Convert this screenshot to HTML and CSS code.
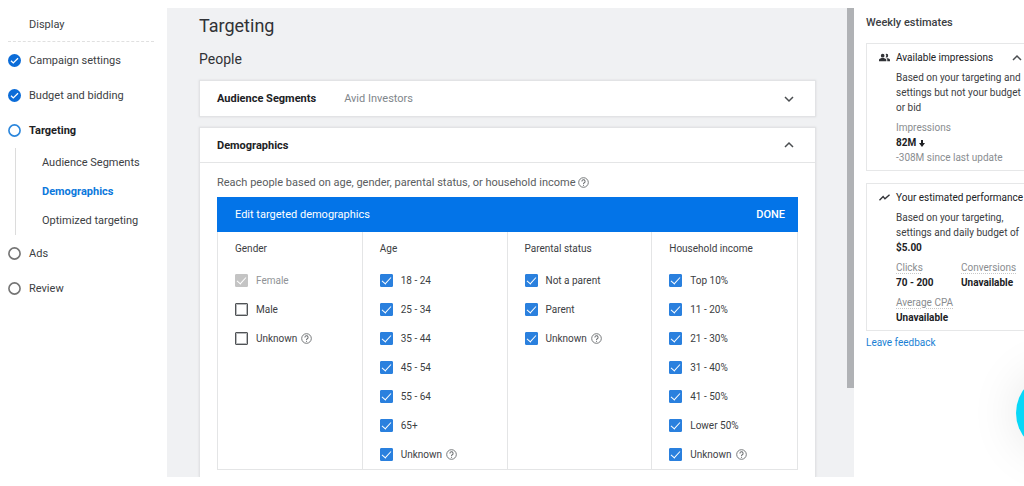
FILE: index.html
```html
<!DOCTYPE html>
<html lang="en">
<head>
<meta charset="utf-8">
<title>Targeting</title>
<link rel="stylesheet" href="styles.css">
</head>
<body>
<svg class="defs" aria-hidden="true">
  <symbol id="help" viewBox="0 0 24 24"><circle cx="12" cy="12" r="10.500" fill="none" stroke="currentColor" stroke-width="2"/><path d="M8.500 9.600a3.500 3.500 0 1 1 5.200 3c-1.200.7-1.700 1.200-1.700 2.600" fill="none" stroke="currentColor" stroke-width="2.200"/><path d="M10.900 17h2.200v2.200h-2.200z" fill="currentColor"/></symbol>
  <symbol id="done" viewBox="0 0 24 24"><circle cx="12" cy="12" r="12" fill="#0b6cd8"/><path d="M5.500 12.300l4.300 4.200 8.700-8.700" fill="none" stroke="#fff" stroke-width="2.400"/></symbol>
  <symbol id="ring" viewBox="0 0 24 24"><circle cx="12" cy="12" r="10.300" fill="#fff" stroke="currentColor" stroke-width="3"/></symbol>
  <symbol id="down" viewBox="0 0 10 10"><path d="M1 3l4 4 4-4" fill="none" stroke="currentColor" stroke-width="1.500"/></symbol>
  <symbol id="up" viewBox="0 0 10 10"><path d="M1 7l4-4 4 4" fill="none" stroke="currentColor" stroke-width="1.500"/></symbol>
</svg>
<div class="app">
  <nav class="steps" aria-label="Campaign steps">
    <p class="steps-title">Display</p>
    <a class="step" href="#settings"><svg class="step-icon"><use href="#done"/></svg>Campaign settings</a>
    <a class="step" href="#budget"><svg class="step-icon"><use href="#done"/></svg>Budget and bidding</a>
    <a class="step current" href="#targeting"><svg class="step-icon"><use href="#ring"/></svg>Targeting</a>
    <div class="substeps">
      <a href="#audience">Audience Segments</a>
      <a class="active" href="#demographics">Demographics</a>
      <a href="#optimized">Optimized targeting</a>
    </div>
    <a class="step" href="#ads"><svg class="step-icon"><use href="#ring"/></svg>Ads</a>
    <a class="step" href="#review"><svg class="step-icon"><use href="#ring"/></svg>Review</a>
  </nav>

  <main class="main">
    <div class="content">
      <h1>Targeting</h1>
      <h2>People</h2>
      <section class="card" id="audience">
        <div class="card-head">
          <h3>Audience Segments</h3>
          <span class="summary">Avid Investors</span>
          <button class="toggle" type="button" aria-label="Expand audience segments"><svg><use href="#down"/></svg></button>
        </div>
      </section>
      <section class="card open" id="demographics">
        <div class="card-head">
          <h3>Demographics</h3>
          <button class="toggle" type="button" aria-label="Collapse demographics"><svg><use href="#up"/></svg></button>
        </div>
        <div class="card-body">
          <p class="lead">Reach people based on age, gender, parental status, or household income <svg class="help"><use href="#help"/></svg></p>
          <div class="editor">
            <div class="editor-head"><span>Edit targeted demographics</span><button type="button">DONE</button></div>
            <div class="groups">
              <fieldset>
                <legend>Gender</legend>
                <label><input type="checkbox" checked disabled><span>Female</span></label>
                <label><input type="checkbox"><span>Male</span></label>
                <label><input type="checkbox"><span>Unknown</span><svg class="help"><use href="#help"/></svg></label>
              </fieldset>
              <fieldset>
                <legend>Age</legend>
                <label><input type="checkbox" checked><span>18 - 24</span></label>
                <label><input type="checkbox" checked><span>25 - 34</span></label>
                <label><input type="checkbox" checked><span>35 - 44</span></label>
                <label><input type="checkbox" checked><span>45 - 54</span></label>
                <label><input type="checkbox" checked><span>55 - 64</span></label>
                <label><input type="checkbox" checked><span>65+</span></label>
                <label><input type="checkbox" checked><span>Unknown</span><svg class="help"><use href="#help"/></svg></label>
              </fieldset>
              <fieldset>
                <legend>Parental status</legend>
                <label><input type="checkbox" checked><span>Not a parent</span></label>
                <label><input type="checkbox" checked><span>Parent</span></label>
                <label><input type="checkbox" checked><span>Unknown</span><svg class="help"><use href="#help"/></svg></label>
              </fieldset>
              <fieldset>
                <legend>Household income</legend>
                <label><input type="checkbox" checked><span>Top 10%</span></label>
                <label><input type="checkbox" checked><span>11 - 20%</span></label>
                <label><input type="checkbox" checked><span>21 - 30%</span></label>
                <label><input type="checkbox" checked><span>31 - 40%</span></label>
                <label><input type="checkbox" checked><span>41 - 50%</span></label>
                <label><input type="checkbox" checked><span>Lower 50%</span></label>
                <label><input type="checkbox" checked><span>Unknown</span><svg class="help"><use href="#help"/></svg></label>
              </fieldset>
            </div>
          </div>
        </div>
      </section>
    </div>
    <div class="scrollbar"><div class="thumb"></div></div>
  </main>

  <aside class="estimates">
    <h2>Weekly estimates</h2>
    <section class="estimate">
      <div class="estimate-head">
        <svg class="estimate-icon" viewBox="0 0 24 24"><path fill="currentColor" d="M8 4a4 4 0 1 1 0 8 4 4 0 0 1 0-8zM16 4a4 4 0 1 1-1.500 7.700 6 6 0 0 0 0-7.400A4 4 0 0 1 16 4zM0 20v-3c0-2.700 5.300-4 8-4s8 1.300 8 4v3zM18 20v-3c0-1.600-.8-2.800-2-3.800 3 .2 8 1.400 8 3.800v3z"/></svg>
        <h3>Available impressions</h3>
        <button class="toggle" type="button" aria-label="Collapse available impressions"><svg><use href="#up"/></svg></button>
      </div>
      <div class="estimate-body">
        <p>Based on your targeting and settings but not your budget or bid</p>
        <dl><div class="wide"><dt>Impressions</dt><dd>82M <svg class="drop" viewBox="0 0 6 8"><path fill="currentColor" d="M2 1h2v3h2L3 8 0 4h2z"/></svg></dd><dd class="note">-308M since last update</dd></div></dl>
      </div>
    </section>
    <section class="estimate">
      <div class="estimate-head">
        <svg class="estimate-icon" viewBox="0 0 24 24"><path fill="none" stroke="currentColor" stroke-width="3" d="M1 18l8-8 4 5 10-9"/></svg>
        <h3>Your estimated performance</h3>
      </div>
      <div class="estimate-body">
        <p>Based on your targeting, settings and daily budget of <strong>$5.00</strong></p>
        <dl>
          <div><dt class="hint">Clicks</dt><dd>70 - 200</dd></div>
          <div><dt class="hint">Conversions</dt><dd>Unavailable</dd></div>
          <div><dt class="hint">Average CPA</dt><dd>Unavailable</dd></div>
        </dl>
      </div>
    </section>
    <a class="feedback" href="#feedback">Leave feedback</a>
  </aside>
</div>
<button class="chat" type="button" aria-label="Open chat"></button>
</body>
</html>
```
FILE: styles.css
```css
* { box-sizing: border-box; }

body {
  margin: 0;
  background: #fff;
  color: #3c4043;
  font: 11px/15px Roboto, "Liberation Sans", sans-serif;
}

h1, h2, h3, p, dl, dd { margin: 0; }
h1, h2 { font-weight: 400; }
a { color: inherit; text-decoration: none; }
button { border: 0; padding: 0; background: none; color: inherit; font: inherit; cursor: pointer; }
.defs { display: none; }

.app {
  display: grid;
  grid-template-columns: 167px minmax(0, 1fr) 170px;
  min-height: 100vh;
  padding: 8px 0 9px;
}

/* Step navigation */
.steps { padding: 0 13px 0 8px; }
.steps-title {
  padding: 9px 0 9px 21px;
  border-bottom: 1px dashed #e0e0e0;
}
.step { display: flex; align-items: center; gap: 8px; height: 35px; }
.steps-title + .step { margin-top: 1px; }
.step-icon { width: 13px; height: 13px; color: #757575; }
.current { color: #202124; font-weight: 700; }
.current .step-icon { color: #2b86dc; }
.substeps { margin: 0 0 1px 7px; padding-left: 26px; border-left: 1px solid #dcdcdc; }
.substeps a { display: flex; align-items: center; height: 29px; }
.substeps .active { color: #0b78dc; font-weight: 700; }

/* Main column */
.main { display: flex; background: #f0f1f3; }
.content { display: flex; flex: 1; flex-direction: column; padding: 6px 31px 0 32px; }
.content h1 { color: #303236; font-size: 18px; line-height: 24px; }
.content h2 { margin: 12px 0; color: #303236; font-size: 14px; line-height: 18px; }
.scrollbar { width: 7px; }
.thumb { height: 81%; background: #b0b2b5; }

.card { background: #fff; border: 1px solid #e2e3e5; box-shadow: 0 0 2px #d8dadc; }
.card.open { flex: 1; margin-top: 10px; border-bottom: 0; clip-path: inset(-4px -4px 0); }
.card-head { display: flex; align-items: center; height: 35px; padding: 0 21px 0 17px; }
.card-head h3 { color: #202124; font-size: 11px; font-weight: 700; }
.summary { margin-left: 28px; color: #80868b; }
.toggle { margin-left: auto; color: #4a4d50; }
.toggle svg { display: block; width: 10px; height: 10px; }
.open .card-head { border-bottom: 1px solid #e4e5e6; }
.card-body { padding: 12px 17px 6px; }
.lead { color: #5a5d60; }
.help { flex: none; width: 11px; height: 11px; color: #6a6d70; vertical-align: -2px; }

.editor { margin-top: 7px; border: 1px solid #e4e5e6; border-top: 0; }
.editor-head {
  display: flex;
  align-items: center;
  justify-content: space-between;
  height: 35px;
  margin: 0 -1px;
  padding: 0 13px 0 18px;
  background: #0374e8;
  color: #fff;
}
.editor-head button { font-weight: 500; }
.groups { display: grid; grid-template-columns: repeat(4, minmax(0, 1fr)); font-size: 10px; }
fieldset { min-width: 0; margin: 0; padding: 9px 0 0 17px; border: 0; border-right: 1px solid #e4e5e6; }
fieldset:last-child { border-right: 0; }
legend { float: left; width: 100%; margin-bottom: 10px; padding: 0; }
label { display: flex; clear: both; align-items: center; height: 29px; }
label span { margin-left: 8px; }
label .help { margin-left: 4px; }
label:has(:disabled) { color: #909396; }

input {
  display: grid;
  place-items: center;
  appearance: none;
  width: 13px;
  height: 13px;
  margin: 0;
  border: 1px solid #505356;
  border-radius: 1px;
  outline: 1px solid #b8babc;
  outline-offset: -2px;
}
input:checked { border-color: #2a80de; background: #2a80de; outline: 0; }
input:checked:disabled { border-color: #c4c4c4; background: #c4c4c4; }
input:checked::after {
  content: "";
  width: 4px;
  height: 8px;
  border: solid #fff;
  border-width: 0 1px 1px 0;
  transform: translateY(-1px) rotate(42deg);
}

/* Estimates column */
.estimates { padding: 7px 0 0 12px; font-size: 10px; overflow: hidden; }
.estimates h2 { margin-bottom: 13px; font-size: 11px; font-weight: 500; }
.estimate { margin-bottom: 12px; padding: 6px 0 5px 12px; border: 1px solid #e6e7e8; border-right: 0; }
.estimate-head { display: flex; align-items: center; padding-right: 2px; }
.estimate-icon { flex: none; width: 11px; height: 11px; margin-right: 6px; color: #303236; }
.estimate h3 { color: #202124; font-size: 10px; font-weight: 400; white-space: nowrap; }
.estimate-body { padding: 5px 0 0 17px; }
.estimate strong, dd { color: #202124; font-weight: 700; }
dl { display: grid; grid-template-columns: 65px 1fr; gap: 5px 0; margin-top: 5px; }
dt { color: #8a8d90; }
.wide { grid-column: 1 / -1; }
.note { color: #8a8d90; font-weight: 400; }
.hint { text-decoration: underline dotted #c8c8c8; text-underline-offset: 2px; }
.drop { width: 6px; height: 8px; vertical-align: -1px; }
.feedback { display: block; margin-top: -8px; color: #1a7fd4; }

/* Chat launcher, partly off the right edge */
.chat {
  position: fixed;
  right: -72px;
  bottom: 33px;
  width: 80px;
  height: 80px;
  border-radius: 50%;
  background: #08d8f8;
  box-shadow: 0 0 50px rgba(0, 0, 0, .1);
}
```
